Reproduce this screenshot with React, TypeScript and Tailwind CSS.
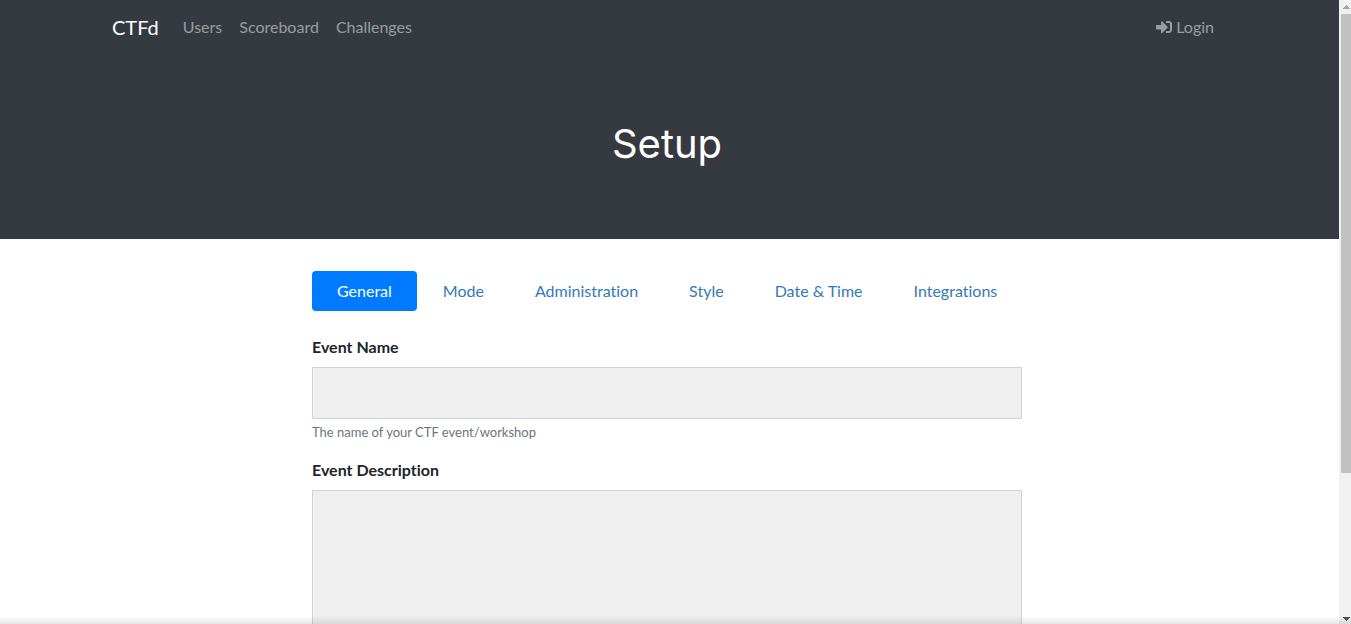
import { useState } from "react";
import { FaSignInAlt } from "react-icons/fa";

const navLinks = ["Users", "Scoreboard", "Challenges"];
const tabs = ["General", "Mode", "Administration", "Style", "Date & Time", "Integrations"];

function Navbar() {
  return (
    <nav className="flex h-14 justify-center pr-[5px] pb-0.5">
      <div className="flex w-full max-w-[1110px] items-center">
        <a href="#" className="mr-4 text-xl leading-[30px] text-white">
          CTFd
        </a>
        <div className="flex flex-1 gap-px">
          {navLinks.map((label) => (
            <a key={label} href="#" className="p-2 text-white/50 hover:text-white/75">
              {label}
            </a>
          ))}
        </div>
        <a href="#" className="flex items-center gap-1 p-2 text-white/50 hover:text-white/75">
          <FaSignInAlt className="size-4" aria-hidden="true" />
          Login
        </a>
      </div>
    </nav>
  );
}

function Scrollbar() {
  return (
    <div aria-hidden="true" className="flex w-3 shrink-0 flex-col bg-[#f1f1f1]">
      <svg className="h-3.5 w-3 shrink-0" viewBox="0 0 12 14" shapeRendering="crispEdges">
        <path d="M7 5h1v1h1v1h1v1h1v1H4V8h1V7h1V6h1z" fill="#a3a3a3" />
      </svg>
      <div className="flex flex-1 flex-col pl-0.5">
        <div className="h-[77%] bg-[#c1c1c1]" />
      </div>
      <svg className="h-3.5 w-3 shrink-0" viewBox="0 0 12 14" shapeRendering="crispEdges">
        <path d="M4 7h7v1h-1v1H9v1H8v1H7v-1H6V9H5V8H4z" fill="#505050" />
      </svg>
    </div>
  );
}

export default function App() {
  const [active, setActive] = useState("General");

  return (
    <div className="relative flex h-screen overflow-hidden bg-white font-[Lato,sans-serif] text-base text-[#212529] [font-variant-ligatures:none]">
      <div className="min-w-0 flex-1 overflow-hidden">
        <header className="bg-[#343a40]">
          <Navbar />
          <div className="flex justify-center pt-16 pr-[5px] pb-[71px]">
            <h1 className="font-[Inter,sans-serif] text-[40px] leading-[48px] text-white">Setup</h1>
          </div>
        </header>

        <main className="flex justify-center pt-8 pr-[5px]">
          <form className="w-full max-w-[710px]" onSubmit={(e) => e.preventDefault()}>
            <div className="mb-6 flex gap-px" role="tablist">
              {tabs.map((label) => (
                <button
                  key={label}
                  type="button"
                  role="tab"
                  aria-selected={active === label}
                  onClick={() => setActive(label)}
                  className={
                    active === label
                      ? "rounded bg-[#007bff] px-[25px] py-2 whitespace-nowrap text-white"
                      : "rounded px-[25px] py-2 whitespace-nowrap text-[#337ab7]"
                  }
                >
                  {label}
                </button>
              ))}
            </div>

            <div className="mb-4">
              <label htmlFor="event-name" className="mb-2 block font-bold">
                Event Name
              </label>
              <input
                id="event-name"
                type="text"
                aria-describedby="event-name-help"
                className="block h-[52px] w-full border border-[#ced4da] bg-[#efefef] px-3"
              />
              <small id="event-name-help" className="mt-1 block text-[13px] leading-[19px] text-[#6c757d]">
                The name of your CTF event/workshop
              </small>
            </div>

            <div>
              <label htmlFor="event-description" className="mb-2 block font-bold">
                Event Description
              </label>
              <textarea
                id="event-description"
                rows={10}
                className="block w-full resize-none border border-[#ced4da] bg-[#efefef] p-3"
              />
            </div>
          </form>
        </main>
      </div>
      <Scrollbar />
      <div className="pointer-events-none absolute inset-x-0 bottom-0 h-2 bg-linear-to-t from-black/10 to-transparent" />
    </div>
  );
}
